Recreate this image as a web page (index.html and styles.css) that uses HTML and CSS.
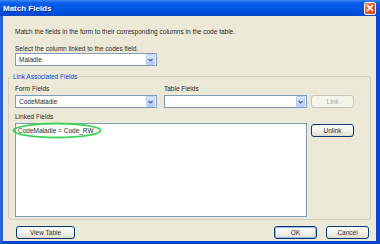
FILE: index.html
```html
<!DOCTYPE html>
<html lang="en">
<head>
  <meta charset="UTF-8" />
  <title>Match Fields</title>
  <link rel="stylesheet" href="styles.css">
</head>
<body>

  <div class="window">
    <div class="titlebar">
      <span class="title">Match Fields</span>
      <div class="close">
        <svg width="8" height="8" viewBox="0 0 8 8"><path d="M1 1 L7 7 M7 1 L1 7" stroke="#fff" stroke-width="1.6"/></svg>
      </div>
    </div>

    <div class="frame">
      <div class="content">
        <p class="intro">Match the fields in the form to their corresponding columns in the code table.</p>
        <div class="label first">Select the column linked to the codes field.</div>
        <div class="combo">
          <span class="value">Maladie</span>
          <span class="drop"><svg width="5" height="4" viewBox="0 0 5 4"><path d="M0.5 1 L2.5 3 L4.5 1" fill="none" stroke="#4d6185" stroke-width="1.2"/></svg></span>
        </div>

        <fieldset class="group">
          <legend>Link Associated Fields</legend>
          <div class="labels">
            <div class="label col-a">Form Fields</div>
            <div class="label">Table Fields</div>
          </div>
          <div class="row">
            <div class="combo col-a">
              <span class="value">CodeMaladie</span>
              <span class="drop"><svg width="5" height="4" viewBox="0 0 5 4"><path d="M0.5 1 L2.5 3 L4.5 1" fill="none" stroke="#4d6185" stroke-width="1.2"/></svg></span>
            </div>
            <div class="combo col-b">
              <span class="value"></span>
              <span class="drop"><svg width="5" height="4" viewBox="0 0 5 4"><path d="M0.5 1 L2.5 3 L4.5 1" fill="none" stroke="#4d6185" stroke-width="1.2"/></svg></span>
            </div>
            <button class="btn disabled">Link</button>
          </div>
          <div class="label linked">Linked Fields</div>
          <div class="row list-row">
            <div class="list">
              <div class="item">CodeMaladie = Code_RW</div>
              <svg class="mark" width="90" height="17" viewBox="0 0 90 17"><ellipse cx="45" cy="8.5" rx="43.5" ry="7" fill="none" stroke="#3fd35a" stroke-width="1.8"/></svg>
            </div>
            <button class="btn">Unlink</button>
          </div>
        </fieldset>

        <div class="footer">
          <button class="btn wide">View Table</button>
          <div class="spacer"></div>
          <button class="btn default">OK</button>
          <button class="btn">Cancel</button>
        </div>
      </div>
    </div>
  </div>

</body>
</html>
```

FILE: styles.css
```css
body {
  margin: 0;
  padding: 0;
  font-family: 'Liberation Sans', Arial, sans-serif;
  font-size: 6.5px;
  color: #2a2a2a;
  background: #ece9d8;
}

.window {
  width: 380px;
  height: 244px;
  display: flex;
  flex-direction: column;
  overflow: hidden;
}

.titlebar {
  height: 16px;
  flex: none;
  display: flex;
  align-items: center;
  justify-content: space-between;
  padding: 0 4px 0 3px;
  background: linear-gradient(#3b8af7 0%, #0a5ee9 18%, #0054e3 55%, #004cd8 85%, #0a45c4 100%);
  box-sizing: border-box;
}

.title {
  color: #fff;
  font-weight: bold;
  font-size: 8px;
  text-shadow: 1px 1px 0 #0a2a8a;
}

.close {
  width: 12px;
  height: 13px;
  border: 1px solid #fff;
  border-radius: 2px;
  background: linear-gradient(135deg, #f0906c 0%, #e35a2c 50%, #c7401a 100%);
  display: flex;
  align-items: center;
  justify-content: center;
  box-sizing: border-box;
}

.frame {
  flex: 1;
  border-left: 3px solid #2d63d8;
  border-right: 4px solid #0b46d2;
  border-bottom: 3px solid #0b46d2;
  background: #ece9d8;
}

.content {
  padding: 0 5px;
}

.intro {
  margin: 11px 0 0 7px;
  line-height: 9px;
}

.label {
  line-height: 9px;
}

.label.first {
  margin: 8px 0 0 7px;
}

.combo {
  height: 13px;
  width: 142px;
  border: 1px solid #7f9db9;
  background: #fff;
  display: flex;
  align-items: center;
  justify-content: space-between;
  box-sizing: border-box;
  padding: 0 1px 0 3px;
}

.content > .combo {
  margin-left: 7px;
}

.drop {
  width: 9px;
  height: 11px;
  border: 1px solid #b9cbf3;
  border-radius: 1px;
  background: linear-gradient(#dce7fd, #b7cbf8);
  box-sizing: border-box;
  display: flex;
  align-items: center;
  justify-content: center;
}

.group {
  margin: 6px 0 0;
  border: 1px solid #d0d0bf;
  border-radius: 3px;
  padding: 3px 6px 2px;
}

.group legend {
  color: #0046d5;
  line-height: 9px;
  padding: 0 2px;
  margin-left: -4px;
}

.labels {
  display: flex;
}

.col-a {
  width: 142px;
  margin-right: 7px;
}

.row {
  display: flex;
  margin-top: 2px;
}

.combo.col-b {
  width: 143px;
  margin-right: 4px;
}

.linked {
  margin-top: 4px;
}

.list-row {
  align-items: flex-start;
}

.list {
  position: relative;
  width: 292px;
  height: 94px;
  border: 1px solid #7f9db9;
  background: #fff;
  box-sizing: border-box;
  margin-right: 4px;
}

.item {
  padding: 2px 0 0 2px;
  line-height: 9px;
}

.mark {
  position: absolute;
  left: -4px;
  top: -2px;
}

.list-row .btn {
  margin-top: 1px;
}

.btn {
  width: 43px;
  height: 13px;
  padding: 0;
  font-family: inherit;
  font-size: 6.5px;
  color: #2a2a2a;
  border: 1px solid #003c74;
  border-radius: 3px;
  background: linear-gradient(#ffffff 0%, #f4f3ee 50%, #e6e3d6 90%, #d6d0c5 100%);
  box-sizing: border-box;
}

.btn.disabled {
  color: #aca899;
  border-color: #c9c7ba;
  background: #f5f4ea;
}

.btn.default {
  box-shadow: inset 0 0 0 1px #9db8ee;
}

.btn.wide {
  width: 59px;
  margin-left: 8px;
}

.footer {
  display: flex;
  gap: 9px;
  margin-top: 6px;
  padding-right: 2px;
}

.spacer {
  flex: 1;
}
```
